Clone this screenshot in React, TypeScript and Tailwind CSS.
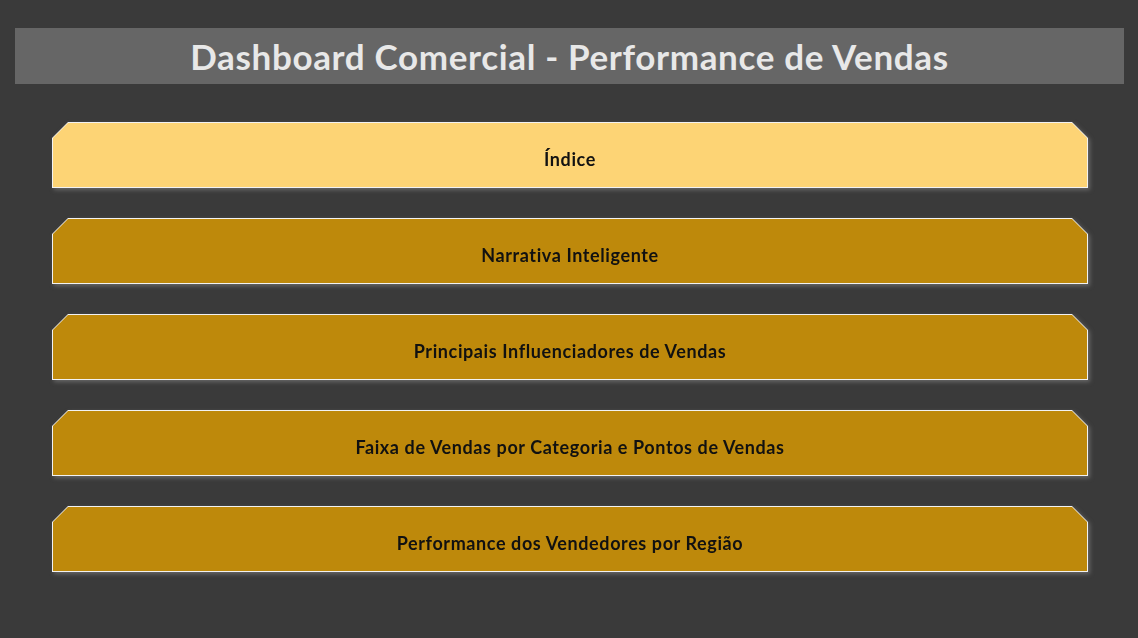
import React from "react";

const items = [
  { label: "Índice", active: true },
  { label: "Narrativa Inteligente", active: false },
  { label: "Principais Influenciadores de Vendas", active: false },
  { label: "Faixa de Vendas por Categoria e Pontos de Vendas", active: false },
  { label: "Performance dos Vendedores por Região", active: false },
];

function NavButton({ label, active }: { label: string; active: boolean }) {
  return (
    <div className="[filter:drop-shadow(2px_2px_2px_rgba(140,140,140,0.55))]">
      <div className="bg-[#f2f2f2] p-[1px] h-[66px] [clip-path:polygon(16px_0,calc(100%-16px)_0,100%_16px,100%_100%,0_100%,0_16px)]">
        <div
          className={
            active
              ? "h-full bg-[#fdd475] flex items-center justify-center pt-[8px] [clip-path:polygon(15px_0,calc(100%-15px)_0,100%_15px,100%_100%,0_100%,0_15px)]"
              : "h-full bg-[#be890b] flex items-center justify-center pt-[8px] [clip-path:polygon(15px_0,calc(100%-15px)_0,100%_15px,100%_100%,0_100%,0_15px)]"
          }
        >
          <span className="text-[18px] font-bold text-[#111] leading-none tracking-[0.6px]">{label}</span>
        </div>
      </div>
    </div>
  );
}

export default function App() {
  return (
    <div className="w-[1138px] h-[638px] bg-[#3a3a3a] pt-[28px] pl-[15px] pr-[14px] font-['Lato','Open_Sans',sans-serif] overflow-hidden">
      <div className="h-[56px] bg-[#666666] flex items-center justify-center">
        <h1 className="text-[35px] font-bold text-[#e8e8e8] leading-none tracking-[0.65px]">
          Dashboard Comercial - Performance de Vendas
        </h1>
      </div>
      <div className="mt-[38px] pl-[37px] pr-[36px] flex flex-col gap-[30px]">
        {items.map((it) => (
          <NavButton key={it.label} label={it.label} active={it.active} />
        ))}
      </div>
    </div>
  );
}
